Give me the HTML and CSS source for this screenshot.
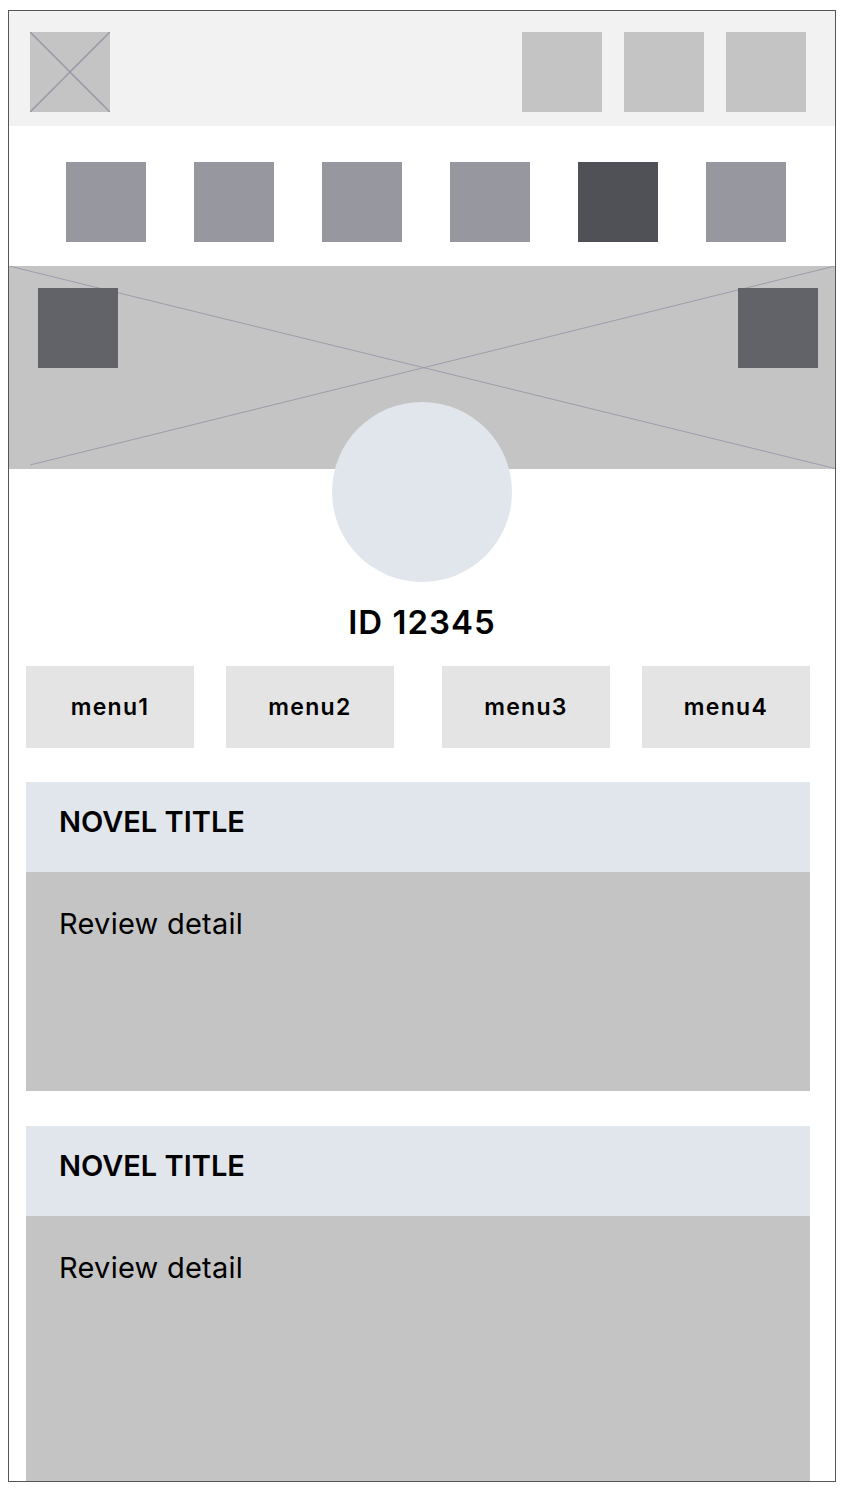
FILE: index.html
```html
<!DOCTYPE html>
<html lang="en">
<head>
<meta charset="utf-8">
<title>Profile</title>
<link rel="stylesheet" href="styles.css">
</head>
<body>
<div class="frame">
  <header class="topbar">
    <div class="logo">
      <svg width="80" height="80" viewBox="0 0 80 80"><line x1="0" y1="0" x2="80" y2="80"/><line x1="0" y1="80" x2="80" y2="0"/></svg>
    </div>
    <div class="top-actions">
      <div class="top-icon"></div>
      <div class="top-icon"></div>
      <div class="top-icon"></div>
    </div>
  </header>
  <nav class="tabs">
    <div class="tab"></div>
    <div class="tab"></div>
    <div class="tab"></div>
    <div class="tab"></div>
    <div class="tab tab-active"></div>
    <div class="tab"></div>
  </nav>
  <section class="banner">
    <svg class="banner-x" width="826" height="203" viewBox="0 0 826 203"><line x1="0" y1="0" x2="826" y2="202.5"/><line x1="21" y1="199" x2="826" y2="0"/></svg>
    <div class="banner-btn"></div>
    <div class="banner-btn"></div>
  </section>
  <div class="avatar"></div>
  <h1 class="user-id">ID 12345</h1>
  <div class="menu-row">
    <div class="menu-group">
      <div class="menu-btn">menu1</div>
      <div class="menu-btn">menu2</div>
    </div>
    <div class="menu-group">
      <div class="menu-btn">menu3</div>
      <div class="menu-btn">menu4</div>
    </div>
  </div>
  <div class="cards">
    <article class="card">
      <div class="card-head">NOVEL TITLE</div>
      <div class="card-body">Review detail</div>
    </article>
    <article class="card card-tall">
      <div class="card-head">NOVEL TITLE</div>
      <div class="card-body">Review detail</div>
    </article>
  </div>
</div>
</body>
</html>
```

FILE: styles.css
```css
html, body {
  margin: 0;
  padding: 0;
  background: #ffffff;
}
body {
  font-family: Inter, "Liberation Sans", sans-serif;
  color: #000;
}
.frame {
  margin: 10px 0 0 8px;
  width: 828px;
  height: 1472px;
  box-sizing: border-box;
  border: 1px solid #555555;
  overflow: hidden;
  background: #fff;
}
.topbar {
  height: 115px;
  box-sizing: border-box;
  background: #f2f2f2;
  display: flex;
  justify-content: space-between;
  align-items: flex-start;
  padding: 21px 29px 0 21px;
}
.logo {
  width: 80px;
  height: 80px;
  background: #c4c4c4;
}
.logo svg {
  display: block;
}
.logo line {
  stroke: #9797a6;
  stroke-width: 1.5;
}
.top-actions {
  display: flex;
  gap: 22px;
}
.top-icon {
  width: 80px;
  height: 80px;
  background: #c4c4c4;
}
.tabs {
  display: flex;
  gap: 48px;
  padding: 36px 0 24px 57px;
}
.tab {
  width: 80px;
  height: 80px;
  background: #96979f;
}
.tab-active {
  background: #505156;
}
.banner {
  position: relative;
  height: 203px;
  background: #c4c4c4;
  display: flex;
  justify-content: space-between;
  align-items: flex-start;
  padding: 22px 17px 0 29px;
  box-sizing: border-box;
}
.banner-x {
  position: absolute;
  left: 0;
  top: 0;
}
.banner-x line {
  stroke: #9d9dab;
  stroke-width: 1;
}
.banner-btn {
  position: relative;
  width: 80px;
  height: 80px;
  background: #626368;
}
.avatar {
  position: relative;
  width: 180px;
  height: 180px;
  border-radius: 50%;
  background: #e1e6ed;
  margin: -67px auto 0;
}
.user-id {
  margin: 20px 0 0;
  text-align: center;
  font-size: 33px;
  line-height: 40px;
  font-weight: 600;
  letter-spacing: 1px;
}
.menu-row {
  display: flex;
  gap: 48px;
  padding: 24px 0 0 17px;
}
.menu-group {
  display: flex;
  gap: 32px;
}
.menu-btn {
  width: 168px;
  height: 82px;
  background: #e4e4e4;
  text-align: center;
  font-size: 23px;
  line-height: 82px;
  font-weight: 600;
  letter-spacing: 1.3px;
}
.cards {
  display: flex;
  flex-direction: column;
  gap: 35px;
  padding: 34px 0 0 17px;
}
.card {
  width: 784px;
}
.card-head {
  height: 90px;
  box-sizing: border-box;
  background: #e1e6ed;
  padding: 22px 0 0 33px;
  font-size: 29px;
  line-height: 35px;
  font-weight: 600;
}
.card-body {
  height: 219px;
  box-sizing: border-box;
  background: #c4c4c4;
  padding: 34px 0 0 33px;
  font-size: 29px;
  line-height: 35px;
  font-weight: 400;
  letter-spacing: 0.25px;
}
.card-tall .card-body {
  height: 320px;
}
```
